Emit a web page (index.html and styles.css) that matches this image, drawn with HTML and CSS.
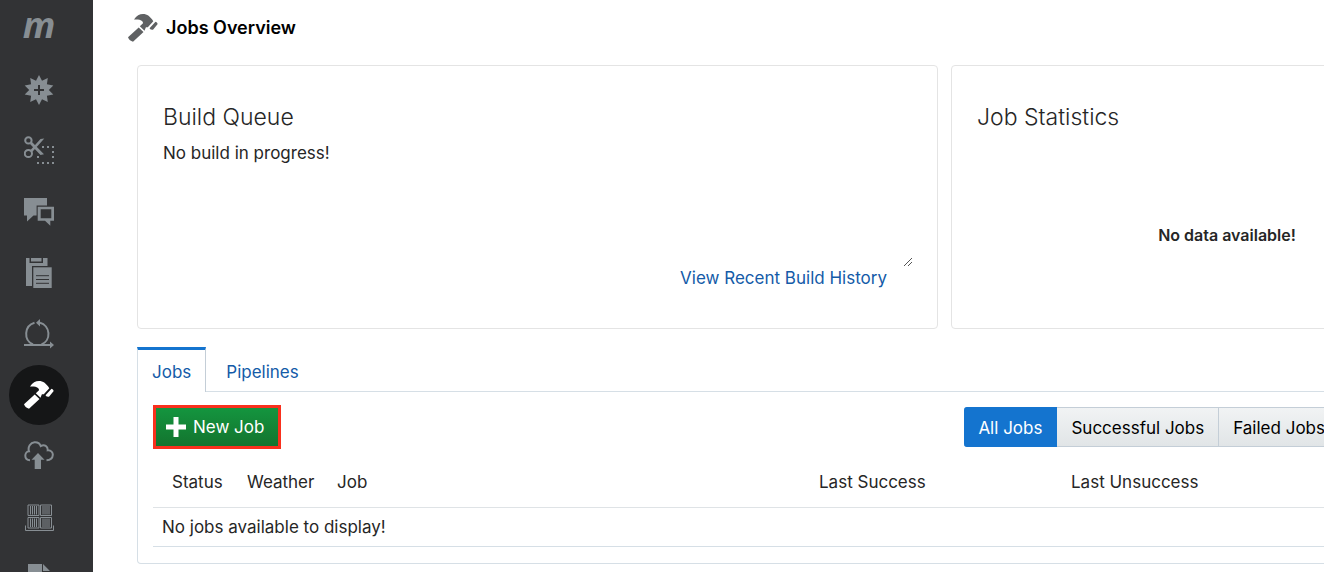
FILE: index.html
```html
<!DOCTYPE html>
<html lang="en">
<head>
<meta charset="utf-8">
<title>Jobs Overview</title>
<link rel="stylesheet" href="styles.css">
</head>
<body>
<svg class="defs" aria-hidden="true">
  <symbol id="hammer" viewBox="0 0 30 30">
    <path d="M0 24.300 10.700 14.500 15.500 19 5 28.700Q1.500 28 0 24.300ZM11.800 13.300 15 10.300C15.200 8 13 6 6 6.500C8.500 2.800 11.500 1 15 1C19 1 22.500 3.500 25.300 8.300L19.800 14.300 17.900 14.300 16.500 17.800ZM27.500 8.800Q29.300 9.200 29.700 11L25 16.800Q22.500 17 21.500 15.300Z"/>
  </symbol>
</svg>
<div class="app">
  <nav class="sidebar" aria-label="Main">
    <a class="logo" href="#" aria-label="Home">m</a>
    <a class="nav-item" href="#" aria-label="Create"><svg class="icon" viewBox="0 0 30 30"><path d="M24.800 15 29.300 19.600 22.900 20.800 23.800 27.100 18 24.300 15 30 12 24.300 6.200 27.100 7.100 20.800 .7 19.600 5.200 15 .7 10.400 7.100 9.200 6.200 2.900 12 5.700 15 0 18 5.700 23.800 2.900 22.900 9.200 29.300 10.400Z"/><path class="cut plus-cut" d="M15 10V20M10 15H20"/></svg></a>
    <a class="nav-item" href="#" aria-label="Snippets"><svg class="icon" viewBox="0 0 30 30"><g class="line"><circle cx="4.400" cy="4.400" r="3.200"/><circle cx="4.400" cy="17.500" r="3.600"/></g><path d="M7.500 5.500 20 18.200 16.500 19 6 8ZM6.500 14 16.500 3 20.300 2.400 8.200 16Z"/><path d="M18 10h2v2h-2zM23 10h2v2h-2zM28 10h2v2h-2zM28 15h2v2h-2zM28 20h2v2h-2zM28 26h2v2h-2zM23 26h2v2h-2zM18 26h2v2h-2zM13 26h2v2h-2zM13 20h2v2h-2z"/></svg></a>
    <a class="nav-item" href="#" aria-label="Discussions"><svg class="icon" viewBox="0 0 30 30"><path d="M0 1H23V8.500H12.600V18.500H9.500L3 24.500V18.500H0Z"/><path fill-rule="evenodd" d="M13.700 9.700H30V23.700H26.300V28.700L21 23.700H13.700ZM16.700 12.300V21.300H27.300V12.300Z"/></svg></a>
    <a class="nav-item" href="#" aria-label="Clipboard"><svg class="icon" viewBox="0 0 30 30"><path d="M2 0H5.500V5H19V0H23.500V8H8V28H2ZM7 0H17.500V3.500H7Z"/><path d="M9.300 9.300H27.700V30H9.300Z"/><path class="cut thin" d="M12 17.700H25M12 21.500H25M12 25.300H25"/></svg></a>
    <a class="nav-item" href="#" aria-label="Sprints"><svg class="icon" viewBox="0 0 30 30"><path class="line" d="M10.500 3.800A11.600 11.600 0 0 0 9 25.500M17.500 25.500A11.600 11.600 0 0 0 16 3.700M0 26H27"/><path d="M16 0 12 3.700 16 7.400ZM26 22.500 30 26 26 29.500Z"/></svg></a>
    <a class="nav-item active" href="#" aria-label="Jobs" aria-current="page"><svg class="icon"><use href="#hammer"/></svg></a>
    <a class="nav-item" href="#" aria-label="Deploy"><svg class="icon" viewBox="0 0 30 30"><path class="line" d="M6 19.300C-.5 19 .3 10.500 5 10.300C3.500 6 6.500 1.500 10.500 1.200C14 1 16 3 16.700 5C20.500 3 24 5 23.700 9.300C27 9 29 11.500 28.800 14C28.600 17 26.500 19 22.500 19.300"/><path d="M14 12 20.500 18.700H17V28H10.700V18.700H7.500Z"/></svg></a>
    <a class="nav-item" href="#" aria-label="Containers"><svg class="icon" viewBox="0 0 30 30"><path class="hair" d="M4 3H15V13.500H4ZM16.500 3H27.500V13.500H16.500ZM4 15.500H15V26H4ZM16.500 15.500H27.500V26H16.500ZM6.500 4V12.500M8.500 4V12.500M10.500 4V12.500M12.500 4V12.500M19 4V12.500M21 4V12.500M23 4V12.500M25 4V12.500M6.500 16.500V25M8.500 16.500V25M10.500 16.500V25M12.500 16.500V25M19 16.500V25M21 16.500V25M23 16.500V25M25 16.500V25M1.500 23.500V28.500H29.500V23.500"/></svg></a>
    <a class="nav-item" href="#" aria-label="Documents"><svg class="icon" viewBox="0 0 30 30"><path d="M4 1H18V9H26V30H4ZM19 1 26 8H19Z"/></svg></a>
  </nav>
  <main class="main">
    <header class="page-head">
      <svg class="icon"><use href="#hammer"/></svg>
      <h1>Jobs Overview</h1>
    </header>
    <div class="content">
      <div class="cards">
        <section class="card">
          <h2>Build Queue</h2>
          <div class="queue">
            <p>No build in progress!</p>
            <svg class="grip" viewBox="0 0 8 8" aria-hidden="true"><path d="M0 8 8 0M4 8 8 4"/></svg>
          </div>
          <a class="history" href="#">View Recent Build History</a>
        </section>
        <section class="card">
          <h2>Job Statistics</h2>
          <p class="empty">No data available!</p>
        </section>
      </div>
      <div class="tabs" role="tablist">
        <button class="tab selected" role="tab" aria-selected="true">Jobs</button>
        <button class="tab" role="tab" aria-selected="false">Pipelines</button>
      </div>
      <section class="panel" role="tabpanel">
        <div class="toolbar">
          <button class="new-job"><svg class="plus" viewBox="0 0 20 20" aria-hidden="true"><path d="M7.500 0h5v7.500h7.500v5h-7.500v7.500h-5v-7.500H0V7.500h7.500z"/></svg>New Job</button>
          <div class="filters">
            <button class="filter on">All Jobs</button>
            <button class="filter">Successful Jobs</button>
            <button class="filter">Failed Jobs</button>
          </div>
        </div>
        <table class="jobs">
          <thead><tr><th class="status">Status</th><th class="weather">Weather</th><th class="job">Job</th><th class="success">Last Success</th><th>Last Unsuccess</th></tr></thead>
          <tbody><tr><td colspan="5">No jobs available to display!</td></tr></tbody>
        </table>
      </section>
    </div>
  </main>
</div>
</body>
</html>
```
FILE: styles.css
```css
* { box-sizing: border-box; }

body {
  margin: 0;
  background: #fff;
  color: #262626;
  font: 17px/24px Inter, "Liberation Sans", sans-serif;
}

h1, h2, p { margin: 0; }
button { font: inherit; cursor: pointer; }
a { color: #145ba8; text-decoration: none; }

.defs { position: absolute; width: 0; height: 0; }

.app {
  display: flex;
  height: 100vh;
  overflow: hidden;
}

/* Sidebar */
.sidebar {
  flex: none;
  width: 93px;
  padding-left: 9px;
  background: #323335;
  overflow: hidden;
}

.logo {
  display: flex;
  align-items: center;
  justify-content: center;
  width: 60px;
  height: 60px;
  padding-bottom: 10px;
  color: #878e93;
  font: italic 700 36px/48px "Open Sans", sans-serif;
}

.nav-item {
  display: flex;
  align-items: center;
  justify-content: center;
  width: 60px;
  height: 60px;
  margin-bottom: 1px;
  border-radius: 50%;
  color: #878e93;
}

.nav-item.active { background: #151617; color: #fff; }

.icon {
  flex: none;
  width: 30px;
  height: 30px;
  fill: currentColor;
}

.line { fill: none; stroke: currentColor; stroke-width: 2; }
.hair { fill: none; stroke: currentColor; stroke-width: 1; }
.cut { stroke: #323335; }
.plus-cut { stroke-width: 2; }
.thin { stroke-width: 1; }

/* Main area */
.main {
  flex: 1;
  min-width: 0;
  overflow: hidden;
}

.page-head {
  display: flex;
  align-items: center;
  gap: 8px;
  height: 55px;
  padding-left: 35px;
  color: #5f6163;
}

.page-head h1 {
  color: #000;
  font-size: 18px;
  line-height: 24px;
  font-weight: 600;
}

.content {
  min-width: 1410px;
  padding: 10px 0 8px 44px;
}

.cards {
  display: grid;
  grid-template-columns: 801fr 552fr;
  gap: 13px;
}

.card {
  display: flex;
  flex-direction: column;
  min-height: 264px;
  padding: 35px 25px 38px;
  border: 1px solid #e4e4e4;
  border-radius: 4px;
}

.card h2 {
  margin-bottom: 8px;
  font-size: 23px;
  line-height: 32px;
  font-weight: 300;
}

.queue {
  display: flex;
  flex: 1;
  align-items: flex-start;
  justify-content: space-between;
}

.grip {
  align-self: flex-end;
  width: 8px;
  height: 8px;
  fill: none;
  stroke: #555;
}

.history {
  align-self: flex-end;
  margin-right: 25px;
}

.empty {
  margin: auto;
  padding-top: 38px;
  font-size: 16px;
  font-weight: 600;
}

/* Tabs */
.tabs {
  display: flex;
  margin-top: 18px;
  border-bottom: 1px solid #d6dfe6;
}

.tab {
  height: 44px;
  padding: 5px 20px 0;
  border: 0;
  background: none;
  color: #145ba8;
}

.tab.selected {
  height: 45px;
  margin-bottom: -1px;
  padding: 2px 14px 0;
  border: solid #c4ced7;
  border-width: 3px 1px 0;
  border-top-color: #1474cf;
  border-left-color: #d6dfe6;
  background: #fff;
}

.panel {
  padding: 13px 15px 16px;
  border: 1px solid #d6dfe6;
  border-top: 0;
  border-radius: 0 0 4px 4px;
}

.toolbar {
  display: grid;
  grid-template-columns: 812fr 523fr;
  align-items: center;
}

.new-job {
  display: flex;
  align-items: center;
  justify-self: start;
  gap: 7px;
  height: 44px;
  padding: 0 14px 0 10px;
  border: 3px solid #f9301d;
  background: linear-gradient(#14953f, #13742e);
  color: #fff;
}

.plus { width: 20px; height: 20px; fill: #fff; }

.filters { display: flex; }

.filter {
  height: 40px;
  padding: 2px 14px 0;
  border: 1px solid #c4ced7;
  border-left-width: 0;
  background: linear-gradient(#f1f3f4, #e1e5e7);
  color: #000;
  white-space: nowrap;
}

.filter.on {
  border-color: #1474cf;
  border-radius: 3px 0 0 3px;
  background: #1474cf;
  color: #fff;
}

/* Jobs table */
.jobs {
  width: 100%;
  margin-top: 8px;
  border-collapse: collapse;
  table-layout: fixed;
  text-align: left;
}

.jobs th {
  height: 50px;
  padding: 0;
  border-bottom: 1px solid #dfe3e6;
  font-weight: 400;
}

.jobs th.status { width: 94px; padding-left: 19px; }
.jobs th.weather { width: 90px; }
.jobs th.job { width: 482px; }
.jobs th.success { width: 252px; }

.jobs td {
  height: 39px;
  padding: 0 9px;
  border-bottom: 1px solid #d6dfe6;
}
```
